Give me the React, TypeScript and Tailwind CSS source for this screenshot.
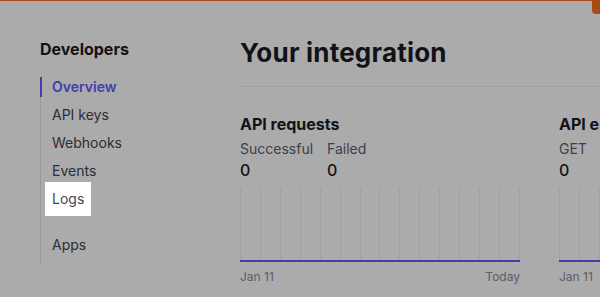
const NAV = ['Overview', 'API keys', 'Webhooks', 'Events', 'Logs']

const CHARTS = [
  { title: 'API requests', stats: [{ label: 'Successful', value: '0' }, { label: 'Failed', value: '0' }] },
  { title: 'API errors', stats: [{ label: 'GET', value: '0' }] },
]

function Chart() {
  return (
    <div>
      <div className="flex h-[73px] justify-between border-b-2 border-[#635bff]">
        {Array.from({ length: 15 }).map((_, i) => (
          <div key={i} className="w-px bg-[#ebeef1]" />
        ))}
      </div>
      <div className="mt-[7px] flex justify-between text-xs leading-4 text-[#8a8f9c]">
        <span>Jan 11</span>
        <span>Today</span>
      </div>
    </div>
  )
}

export default function App() {
  return (
    <div className="relative h-[297px] w-[600px] overflow-hidden bg-white font-['Inter',sans-serif]">
      <div className="h-px bg-[#fb721e]" />
      <div className="absolute right-0 top-0 h-[14px] w-2 rounded-bl bg-[#fb721e]" />

      <div className="flex">
        <aside className="w-[240px] shrink-0 pl-10 pt-9">
          <h2 className="text-base font-bold leading-6 text-[#1a1b25]">Developers</h2>
          <nav className="mt-4 flex w-[160px] flex-col gap-2 border-l border-[#e3e6ea] pb-2 text-sm leading-5">
            {NAV.map((item, i) => (
              <div
                key={item}
                className={
                  i === 0
                    ? '-ml-px border-l-2 border-[#635bff] pl-[10px] font-semibold text-[#635bff]'
                    : '-ml-px border-l-2 border-transparent pl-[10px] text-[#414552]'
                }
              >
                {item === 'Logs' ? (
                  <span className="relative z-10 -m-[7px] inline-block bg-white p-[7px] shadow-[0_0_0_9999px_rgba(0,0,0,0.33)]">
                    Logs
                  </span>
                ) : (
                  item
                )}
              </div>
            ))}
            <div className="-ml-px mt-[18px] border-l-2 border-transparent pl-[10px] text-[#414552]">Apps</div>
          </nav>
        </aside>

        <main className="min-w-0 flex-1 overflow-hidden pt-9">
          <h1 className="whitespace-nowrap text-[26px] font-bold leading-8 tracking-[0.2px] text-[#1a1b25]">
            Your integration
          </h1>
          <div className="mt-[17px] border-t border-[#ebeef1]" />

          <div className="mt-[25px] flex gap-[39px]">
            {CHARTS.map((c) => (
              <section key={c.title} className="w-[280px] shrink-0">
                <h3 className="whitespace-nowrap text-base font-bold leading-6 text-[#1a1b25]">{c.title}</h3>
                <div className="mt-[3px] flex">
                  {c.stats.map((s) => (
                    <div key={s.label} className="w-[87px]">
                      <div className="text-sm leading-5 text-[#596171]">{s.label}</div>
                      <div className="mt-px text-base font-medium leading-5 text-[#1a1b25]">{s.value}</div>
                    </div>
                  ))}
                </div>
                <div className="mt-[9px]">
                  <Chart />
                </div>
              </section>
            ))}
          </div>
        </main>
      </div>
    </div>
  )
}
